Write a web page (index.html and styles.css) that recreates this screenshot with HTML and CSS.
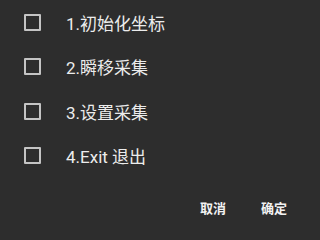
FILE: index.html
```html
<!DOCTYPE html>
<html lang="zh">
<head>
<meta charset="utf-8">
<link rel="stylesheet" href="styles.css">
</head>
<body>
<div class="dialog">
  <ul class="list">
    <li class="item"><span class="box"></span><span class="label">1.初始化坐标</span></li>
    <li class="item"><span class="box"></span><span class="label">2.瞬移采集</span></li>
    <li class="item"><span class="box"></span><span class="label">3.设置采集</span></li>
    <li class="item"><span class="box"></span><span class="label">4.Exit 退出</span></li>
  </ul>
  <div class="actions">
    <span class="btn">取消</span>
    <span class="btn">确定</span>
  </div>
</div>
</body>
</html>
```
FILE: styles.css
```css
html, body {
  margin: 0;
  padding: 0;
  background: #2d2d2d;
}
.dialog {
  width: 300px;
  height: 236px;
  display: flex;
  flex-direction: column;
  font-family: Roboto, "Noto Sans CJK SC", sans-serif;
  color: #ececec;
}
.list {
  list-style: none;
  margin: 0;
  padding: 0;
}
.item {
  height: 44.5px;
  display: flex;
  align-items: center;
  padding-left: 24px;
}
.box {
  width: 13px;
  height: 13px;
  border: 2px solid #c4c4c4;
  border-radius: 1px;
  flex: none;
}
.label {
  margin-left: 25px;
  font-size: 17px;
}
.actions {
  flex: 1;
  display: flex;
  align-items: center;
  justify-content: flex-end;
  gap: 35px;
  padding-right: 13px;
}
.btn {
  font-size: 13px;
  font-weight: 700;
  color: #f2f2f2;
}
```
